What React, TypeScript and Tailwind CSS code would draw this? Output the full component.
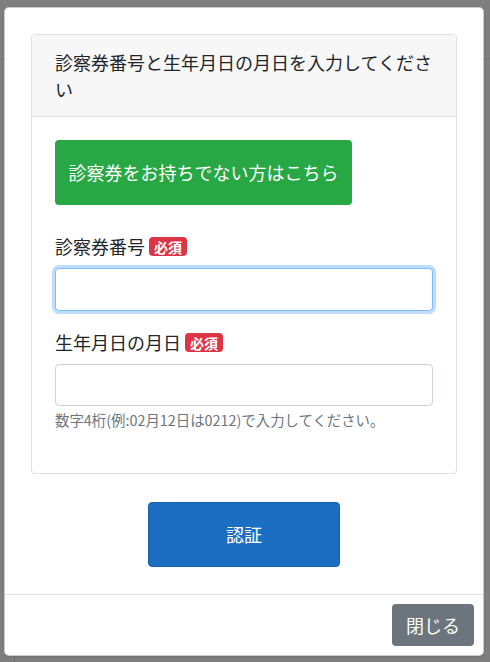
import React from 'react';

const font = { fontFamily: '"Noto Sans CJK JP", "Noto Sans", sans-serif' };

function RequiredBadge() {
  return (
    <span className="ml-[4px] inline-flex h-[19px] items-center rounded-[4px] bg-[#dc3545] px-[5px] text-[14px] font-bold leading-none text-white">
      必須
    </span>
  );
}

export default function App() {
  return (
    <div className="relative h-[662px] w-full overflow-hidden bg-white text-[#212529]" style={font}>
      {/* page underneath the backdrop */}
      <div className="h-[59px] border-b border-[#e5e5e5]"></div>
      <div className="ml-[14px] h-full border-l border-[#d6d6d6]"></div>

      {/* backdrop */}
      <div className="absolute inset-0 bg-black/50"></div>

      {/* modal */}
      <div className="absolute left-[4px] top-[7px] w-[480px] rounded-[5px] border border-black/20 bg-white shadow-sm">
        <div className="p-[26px] pb-[27px]">
          <div className="rounded-[4px] border border-[#dfdfdf]">
            <div className="border-b border-[#dfdfdf] bg-[#f7f7f7] pb-[13px] pl-[23px] pr-[20px] pt-[14px] text-[18px] leading-[27px]">
              診察券番号と生年月日の月日を入力してください
            </div>
            <div className="px-[23px] pb-[43px] pt-[23px]">
              <button className="h-[65px] rounded-[4px] bg-[#28a745] px-[13.5px] text-[18px] text-white">
                診察券をお持ちでない方はこちら
              </button>

              <label className="mt-[28px] flex items-center text-[18px] leading-[27px]">
                診察券番号
                <RequiredBadge />
              </label>
              <input
                type="text"
                className="mt-[8px] block h-[43px] w-full rounded-[4px] border border-[#80bdff] bg-white px-3 shadow-[0_0_0_3px_rgba(0,123,255,0.25)] outline-none"
              />

              <label className="mt-[18px] flex items-center text-[18px] leading-[27px]">
                生年月日の月日
                <RequiredBadge />
              </label>
              <input
                type="text"
                className="mt-[8px] block h-[42px] w-[378px] rounded-[4px] border border-[#ced4da] bg-white px-3 outline-none"
              />
              <p className="mt-[3px] text-[14.4px] leading-[21px] text-[#6c757d]">
                数字4桁(例:02月12日は0212)で入力してください。
              </p>
            </div>
          </div>

          <div className="mt-[28px] flex justify-center">
            <button className="h-[65px] w-[192px] rounded-[4px] border border-[#1861ac] bg-[#1b6ec2] text-[18px] text-white">
              認証
            </button>
          </div>
        </div>

        <div className="flex justify-end border-t border-[#dee2e6] px-[9px] py-[9px]">
          <button className="h-[42px] w-[82px] rounded-[4px] bg-[#6c757d] text-[18px] text-white">
            閉じる
          </button>
        </div>
      </div>
    </div>
  );
}
